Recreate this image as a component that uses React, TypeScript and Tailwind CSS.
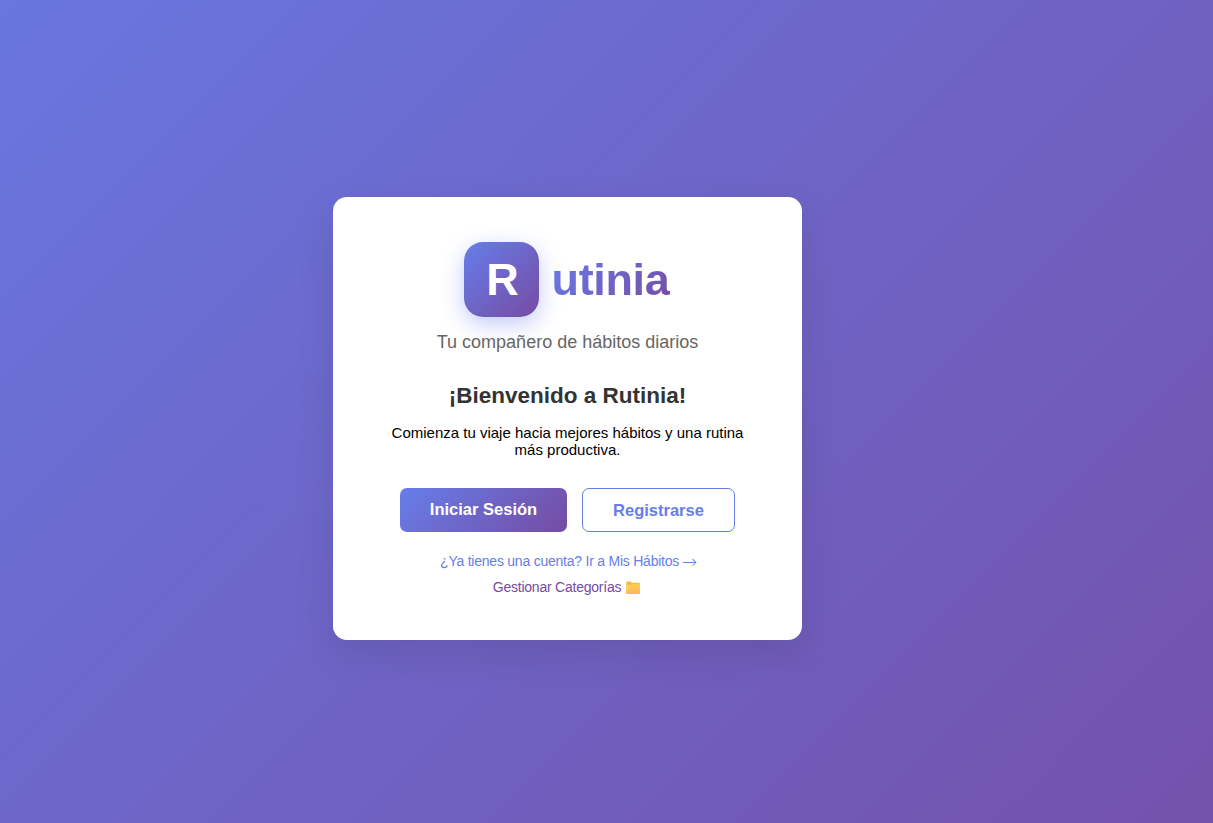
function FolderIcon() {
  return (
    <svg viewBox="0 0 14 14" className="ml-[5px] h-[14px] w-[14px]" aria-hidden="true">
      <defs>
        <linearGradient id="folder" x1="0" y1="0" x2="0.3" y2="1">
          <stop offset="0" stopColor="#ffd853" />
          <stop offset="1" stopColor="#ffb55c" />
        </linearGradient>
      </defs>
      <path d="M.3 1.2Q.3.5 1 .5H4.8L6 1.7H13Q13.7 1.7 13.7 2.4V12.4Q13.7 13 13 13H1Q.3 13 .3 12.4Z" fill="#f9bb3c" />
      <path d="M.3 4H4.8L6 3.2H13.7V12.4Q13.7 13 13 13H1Q.3 13 .3 12.4Z" fill="url(#folder)" />
    </svg>
  );
}

export default function App() {
  return (
    <div className="flex h-[823px] w-full justify-center overflow-hidden bg-[linear-gradient(135deg,#667eea_0%,#764ba2_100%)] bg-[length:1920px_945px] bg-[position:-392px_-54px] pt-[197px] pr-[78px] font-['Liberation_Sans',Arial,sans-serif]">
      <main className="flex h-[443px] w-[469px] shrink-0 flex-col items-center rounded-[14px] bg-white pt-[45px] text-center whitespace-nowrap shadow-[0_14px_38px_rgba(0,0,0,0.1)]">
        <div className="flex h-[75px] items-center gap-[13px]">
          <div className="flex h-[75px] w-[75px] items-center justify-center rounded-[19px] bg-[linear-gradient(135deg,#667eea,#764ba2)] pl-[3px] text-[45px] leading-[75px] font-bold text-white shadow-[0_7px_22px_rgba(102,126,234,0.4)]">
            <span>R</span>
          </div>
          <h1 className="bg-[linear-gradient(135deg,#667eea,#764ba2)] bg-clip-text pr-[2px] text-[45px] leading-[52px] font-bold tracking-[-0.35px] text-transparent">utinia</h1>
        </div>
        <p className="mt-[15px] text-[18px] leading-[21px] text-[#666666]">Tu compañero de hábitos diarios</p>
        <h2 className="mt-[30px] text-[22.5px] leading-[26px] font-bold text-[#333333]">¡Bienvenido a Rutinia!</h2>
        <p className="mt-[15px] text-[15px] leading-[17px] text-black">
          Comienza tu viaje hacia mejores hábitos y una rutina
          <br />
          más productiva.
        </p>
        <div className="mt-[30px] flex gap-[15px] text-[16.5px] leading-[19px] font-bold">
          <button className="h-[44px] w-[167px] rounded-[7px] bg-[linear-gradient(135deg,#667eea,#764ba2)] pb-[1px] text-white">Iniciar Sesión</button>
          <button className="h-[44px] w-[153px] rounded-[7px] border border-[#667eea] bg-white text-[#667eea]">Registrarse</button>
        </div>
        <a className="mt-[21px] flex h-[17px] items-center gap-[3px] pl-[2px] text-[14px] leading-[17px] tracking-[-0.23px] text-[#667eea]">
          ¿Ya tienes una cuenta? Ir a Mis Hábitos
          <span className="font-['DejaVu_Sans',sans-serif] text-[18px] font-extralight">→</span>
        </a>
        <a className="mt-[9px] flex items-center pr-[2px] text-[14px] leading-[17px] tracking-[-0.23px] text-[#764ba2]">
          Gestionar Categorías
          <FolderIcon />
        </a>
      </main>
    </div>
  );
}
